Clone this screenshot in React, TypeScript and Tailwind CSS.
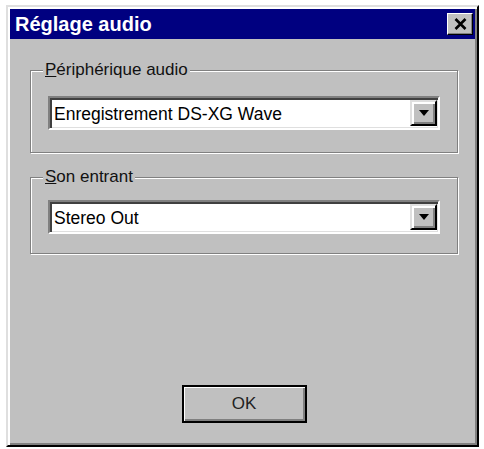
import React from 'react';

const font = { fontFamily: '"Liberation Sans", Arial, sans-serif' };

const Combo = ({ value }: { value: string }) => (
  <div className="flex h-[34px] items-stretch bg-white border-2 border-t-[#808080] border-l-[#808080] border-r-white border-b-white shadow-[inset_2px_2px_0_#404040,inset_-1px_-1px_0_#dfdfdf]">
    <div className="flex flex-1 items-center pl-[4px] pt-[2px] text-[17.5px] text-black">{value}</div>
    <div className="my-[2px] mr-[1px] flex w-[27px] items-center justify-center bg-[#c0c0c0] border-2 border-t-[#dfdfdf] border-l-[#dfdfdf] border-r-black border-b-black shadow-[inset_2px_2px_0_#fff,inset_-2px_-2px_0_#808080]">
      <svg width="10" height="6" viewBox="0 0 10 6">
        <polygon points="0,0 10,0 5,6" fill="black" />
      </svg>
    </div>
  </div>
);

const Group = ({ label, value, className }: { label: string; value: string; className: string }) => (
  <fieldset className={`border border-[#808080] shadow-[inset_1px_1px_0_#fff,1px_1px_0_#fff] px-[17px] ${className}`}>
    <legend className="ml-[-5px] bg-[#c0c0c0] px-[2px] text-[17px] leading-[20px] text-[#111]">
      <span className="underline">{label[0]}</span>
      {label.slice(1)}
    </legend>
    <Combo value={value} />
  </fieldset>
);

export default function App() {
  return (
    <div className="w-[484px] h-[449px] bg-white overflow-hidden" style={font}>
      <div className="ml-[6px] mt-[5px] w-[473px] h-[442px] bg-[#c0c0c0] border-2 border-t-[#dfdfdf] border-l-[#dfdfdf] border-r-black border-b-black shadow-[inset_2px_2px_0_#fff,inset_-2px_-2px_0_#808080] p-[2px] flex flex-col">
        <div className="flex h-[30px] items-center justify-between bg-[#000080] pl-[5px] pr-[2px]">
          <span className="text-[20px] font-bold text-white">Réglage audio</span>
          <div className="flex h-[22px] w-[26px] items-center justify-center bg-[#c0c0c0] border border-t-white border-l-white border-r-black border-b-black shadow-[inset_-1px_-1px_0_#808080]">
            <svg width="13" height="12" viewBox="0 0 13 12">
              <path d="M1.5 1 L11.5 11 M11.5 1 L1.5 11" stroke="black" strokeWidth="2.6" />
            </svg>
          </div>
        </div>
        <div className="flex flex-1 flex-col pl-[20px] pr-[17px]">
          <Group label="Périphérique audio" value="Enregistrement DS-XG Wave" className="mt-[21px] pt-[16px] pb-[22px]" />
          <Group label="Son entrant" value="Stereo Out" className="mt-[14px] pt-[13px] pb-[19px]" />
          <div className="mt-auto mb-[20px] flex justify-center">
            <button className="h-[38px] w-[125px] bg-[#c0c0c0] border-2 border-black text-[17px] text-[#222] shadow-[inset_1px_1px_0_#fff,inset_-2px_-2px_0_#808080]">
              OK
            </button>
          </div>
        </div>
      </div>
    </div>
  );
}
